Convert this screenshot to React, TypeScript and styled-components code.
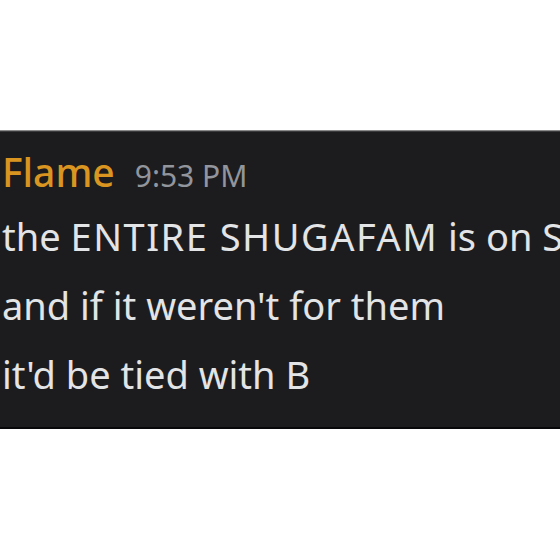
import styled, { createGlobalStyle } from 'styled-components';

const GlobalStyle = createGlobalStyle`
  html, body {
    margin: 0;
    padding: 0;
    background: #ffffff;
  }
  body {
    font-family: "Noto Sans", "Open Sans", sans-serif;
  }
`;

const Page = styled.div`
  width: 560px;
  height: 560px;
  display: flex;
  flex-direction: column;
  padding-top: 130px;
  box-sizing: border-box;
  overflow: hidden;
`;

const ChatPanel = styled.div`
  height: 299px;
  box-sizing: border-box;
  background: #1c1c1f;
  border-top: 1px solid #8a8a8a;
  border-bottom: 2px solid #08080a;
  box-shadow: inset 0 1px 0 #3a3a3d;
  padding: 14px 0 0 2px;
  overflow: hidden;
  white-space: nowrap;
`;

const Header = styled.div`
  display: flex;
  align-items: baseline;
  gap: 20px;
  height: 57px;
`;

const Username = styled.span`
  color: #d99520;
  font-size: 39px;
  font-weight: 500;
`;

const Timestamp = styled.span`
  color: #92959c;
  font-size: 30px;
`;

const Line = styled.div`
  color: #e3e4e6;
  font-size: 38px;
  line-height: 69px;
`;

// the reference font draws capitals a little wider than Noto Sans
const Caps = styled.span`
  letter-spacing: 1.5px;
`;

export default function App() {
  return (
    <>
      <GlobalStyle />
      <Page>
        <ChatPanel>
          <Header>
            <Username>Flame</Username>
            <Timestamp>9:53 PM</Timestamp>
          </Header>
          <Line>
            the <Caps>ENTIRE SHUGAFAM</Caps> is on S
          </Line>
          <Line>and if it weren't for them</Line>
          <Line>it'd be tied with B</Line>
        </ChatPanel>
      </Page>
    </>
  );
}
